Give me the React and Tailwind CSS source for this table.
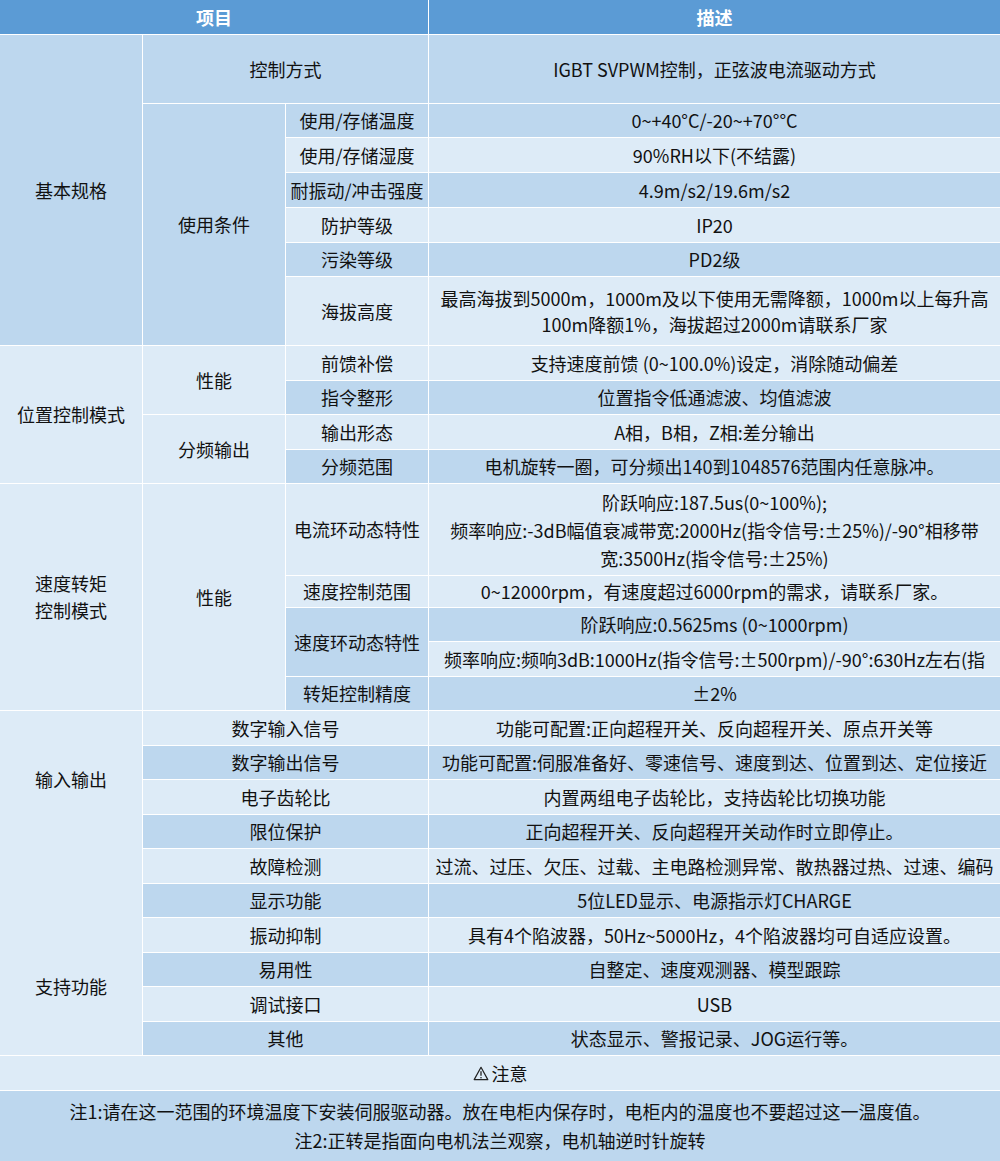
import React from "react";

const D = "bg-[#bdd7ee]";
const L = "bg-[#ddebf7]";

const Cell = ({ className = "", children }) => (
  <div className={`flex items-center justify-center text-center ${className}`}>
    {children}
  </div>
);

const WarnIcon = () => (
  <svg width="16" height="15" viewBox="0 0 16 15" className="mr-[3px] mt-[1px]">
    <path
      d="M8 1.3 L14.8 13.6 L1.2 13.6 Z"
      fill="none"
      stroke="#222"
      strokeWidth="1.2"
      strokeLinejoin="round"
    />
    <line x1="8" y1="5.2" x2="8" y2="9.8" stroke="#222" strokeWidth="1.3" />
    <circle cx="8" cy="11.7" r="0.8" fill="#222" />
  </svg>
);

const App = () => {
  return (
    <div className="w-[1000px] bg-white font-['Noto_Sans_CJK_SC','Noto_Sans',sans-serif] text-[18px] leading-[27px] text-[#111]">
      <div className="grid grid-cols-[142px_142px_142px_571px] gap-px grid-rows-[34px_68px_33px_34px_34px_34px_33px_68px_34px_33px_34px_33px_91px_31px_33px_34px_33px_34px_33px_34px_33px_34px_33px_34px_33px_34px_33px_34px_70px]">
        {/* header */}
        <Cell className="row-start-1 col-start-1 col-span-3 bg-[#5b9bd5] text-white font-bold">项目</Cell>
        <Cell className="row-start-1 col-start-4 bg-[#5b9bd5] text-white font-bold">描述</Cell>

        {/* 基本规格 */}
        <Cell className={`row-start-2 row-span-7 col-start-1 ${D}`}>基本规格</Cell>
        <Cell className={`row-start-2 col-start-2 col-span-2 ${D}`}>控制方式</Cell>
        <Cell className={`row-start-2 col-start-4 ${D}`}>IGBT SVPWM控制，正弦波电流驱动方式</Cell>
        <Cell className={`row-start-3 row-span-6 col-start-2 ${D}`}>使用条件</Cell>
        <Cell className={`row-start-3 col-start-3 ${D}`}>使用/存储温度</Cell>
        <Cell className={`row-start-3 col-start-4 ${D}`}>0~+40°C/-20~+70°°C</Cell>
        <Cell className={`row-start-4 col-start-3 ${L}`}>使用/存储湿度</Cell>
        <Cell className={`row-start-4 col-start-4 ${L}`}>90%RH以下(不结露)</Cell>
        <Cell className={`row-start-5 col-start-3 ${D} whitespace-nowrap`}>耐振动/冲击强度</Cell>
        <Cell className={`row-start-5 col-start-4 ${D}`}>4.9m/s2/19.6m/s2</Cell>
        <Cell className={`row-start-6 col-start-3 ${L}`}>防护等级</Cell>
        <Cell className={`row-start-6 col-start-4 ${L}`}>IP20</Cell>
        <Cell className={`row-start-7 col-start-3 ${D}`}>污染等级</Cell>
        <Cell className={`row-start-7 col-start-4 ${D}`}>PD2级</Cell>
        <Cell className={`row-start-8 col-start-3 ${L}`}>海拔高度</Cell>
        <Cell className={`row-start-8 col-start-4 ${L} whitespace-nowrap leading-[26px]`}>
          最高海拔到5000m，1000m及以下使用无需降额，1000m以上每升高
          <br />
          100m降额1%，海拔超过2000m请联系厂家
        </Cell>

        {/* 位置控制模式 */}
        <Cell className={`row-start-9 row-span-4 col-start-1 ${L}`}>位置控制模式</Cell>
        <Cell className={`row-start-9 row-span-2 col-start-2 ${L}`}>性能</Cell>
        <Cell className={`row-start-9 col-start-3 ${L}`}>前馈补偿</Cell>
        <Cell className={`row-start-9 col-start-4 ${L}`}>支持速度前馈 (0~100.0%)设定，消除随动偏差</Cell>
        <Cell className={`row-start-10 col-start-3 ${D}`}>指令整形</Cell>
        <Cell className={`row-start-10 col-start-4 ${D}`}>位置指令低通滤波、均值滤波</Cell>
        <Cell className={`row-start-11 row-span-2 col-start-2 ${L}`}>分频输出</Cell>
        <Cell className={`row-start-11 col-start-3 ${L}`}>输出形态</Cell>
        <Cell className={`row-start-11 col-start-4 ${L}`}>A相，B相，Z相:差分输出</Cell>
        <Cell className={`row-start-12 col-start-3 ${D}`}>分频范围</Cell>
        <Cell className={`row-start-12 col-start-4 ${D}`}>电机旋转一圈，可分频出140到1048576范围内任意脉冲。</Cell>

        {/* 速度转矩控制模式 */}
        <Cell className={`row-start-13 row-span-5 col-start-1 ${L}`}>
          速度转矩
          <br />
          控制模式
        </Cell>
        <Cell className={`row-start-13 row-span-5 col-start-2 ${L}`}>性能</Cell>
        <Cell className={`row-start-13 col-start-3 ${L}`}>电流环动态特性</Cell>
        <Cell className={`row-start-13 col-start-4 ${L} whitespace-nowrap leading-[28px]`}>
          阶跃响应:187.5us(0~100%);
          <br />
          频率响应:-3dB幅值衰减带宽:2000Hz(指令信号:±25%)/-90°相移带
          <br />
          宽:3500Hz(指令信号:±25%)
        </Cell>
        <Cell className={`row-start-14 col-start-3 ${L}`}>速度控制范围</Cell>
        <Cell className={`row-start-14 col-start-4 ${L}`}>0~12000rpm，有速度超过6000rpm的需求，请联系厂家。</Cell>
        <Cell className={`row-start-15 row-span-2 col-start-3 ${D}`}>速度环动态特性</Cell>
        <Cell className={`row-start-15 col-start-4 ${D}`}>阶跃响应:0.5625ms (0~1000rpm)</Cell>
        <Cell className={`row-start-16 col-start-4 ${L} whitespace-nowrap overflow-hidden`}>
          频率响应:频响3dB:1000Hz(指令信号:±500rpm)/-90°:630Hz左右(指
        </Cell>
        <Cell className={`row-start-17 col-start-3 ${D}`}>转矩控制精度</Cell>
        <Cell className={`row-start-17 col-start-4 ${D}`}>±2%</Cell>

        {/* 输入输出 / 支持功能 */}
        <div className={`row-start-18 row-span-10 col-start-1 ${L} flex flex-col justify-between`}>
          <div className="h-[137px] flex items-center justify-center">输入输出</div>
          <div className="h-[137px] flex items-center justify-center">支持功能</div>
        </div>
        <Cell className={`row-start-18 col-start-2 col-span-2 ${L}`}>数字输入信号</Cell>
        <Cell className={`row-start-18 col-start-4 ${L}`}>功能可配置:正向超程开关、反向超程开关、原点开关等</Cell>
        <Cell className={`row-start-19 col-start-2 col-span-2 ${D}`}>数字输出信号</Cell>
        <Cell className={`row-start-19 col-start-4 ${D} whitespace-nowrap overflow-hidden`}>功能可配置:伺服准备好、零速信号、速度到达、位置到达、定位接近</Cell>
        <Cell className={`row-start-20 col-start-2 col-span-2 ${L}`}>电子齿轮比</Cell>
        <Cell className={`row-start-20 col-start-4 ${L}`}>内置两组电子齿轮比，支持齿轮比切换功能</Cell>
        <Cell className={`row-start-21 col-start-2 col-span-2 ${D}`}>限位保护</Cell>
        <Cell className={`row-start-21 col-start-4 ${D}`}>正向超程开关、反向超程开关动作时立即停止。</Cell>
        <Cell className={`row-start-22 col-start-2 col-span-2 ${L}`}>故障检测</Cell>
        <Cell className={`row-start-22 col-start-4 ${L} whitespace-nowrap overflow-hidden`}>过流、过压、欠压、过载、主电路检测异常、散热器过热、过速、编码</Cell>
        <Cell className={`row-start-23 col-start-2 col-span-2 ${D}`}>显示功能</Cell>
        <Cell className={`row-start-23 col-start-4 ${D}`}>5位LED显示、电源指示灯CHARGE</Cell>
        <Cell className={`row-start-24 col-start-2 col-span-2 ${L}`}>振动抑制</Cell>
        <Cell className={`row-start-24 col-start-4 ${L}`}>具有4个陷波器，50Hz~5000Hz，4个陷波器均可自适应设置。</Cell>
        <Cell className={`row-start-25 col-start-2 col-span-2 ${D}`}>易用性</Cell>
        <Cell className={`row-start-25 col-start-4 ${D}`}>自整定、速度观测器、模型跟踪</Cell>
        <Cell className={`row-start-26 col-start-2 col-span-2 ${L}`}>调试接口</Cell>
        <Cell className={`row-start-26 col-start-4 ${L}`}>USB</Cell>
        <Cell className={`row-start-27 col-start-2 col-span-2 ${D}`}>其他</Cell>
        <Cell className={`row-start-27 col-start-4 ${D}`}>状态显示、警报记录、JOG运行等。</Cell>

        {/* notes */}
        <Cell className={`row-start-28 col-start-1 col-span-4 ${L}`}>
          <WarnIcon />
          注意
        </Cell>
        <div className={`row-start-29 col-start-1 col-span-4 ${D} flex flex-col items-center justify-center leading-[29px]`}>
          <div>注1:请在这一范围的环境温度下安装伺服驱动器。放在电柜内保存时，电柜内的温度也不要超过这一温度值。</div>
          <div>注2:正转是指面向电机法兰观察，电机轴逆时针旋转</div>
        </div>
      </div>
    </div>
  );
};

export default App;
